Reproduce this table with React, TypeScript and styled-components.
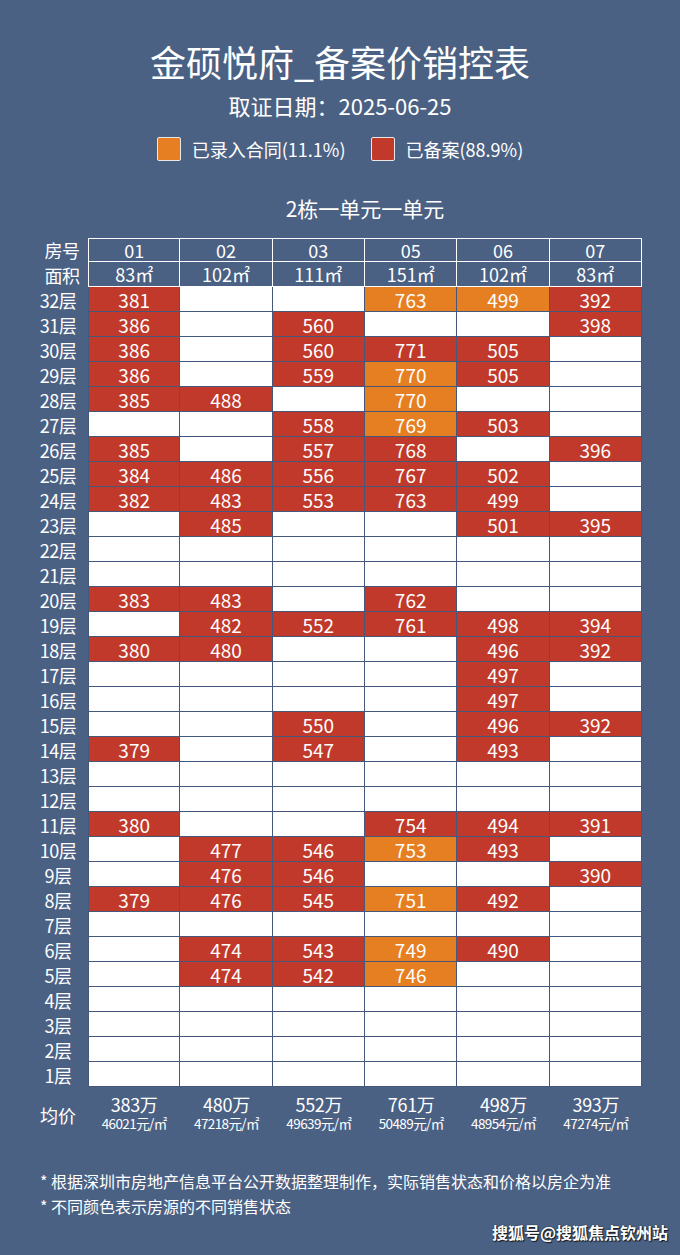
import React from 'react';
import styled, { createGlobalStyle } from 'styled-components';

const colors = {
	page: '#4b6184',
	line: '#43587b',
	filed: '#c0392b',
	contract: '#e67e22',
	white: '#ffffff',
};

const font = `"Noto Sans CJK SC", "Noto Sans", sans-serif`;

const GlobalStyle = createGlobalStyle`
	html, body {
		margin: 0;
		padding: 0;
		background: ${colors.page};
	}
	body {
		font-family: ${font};
		color: ${colors.white};
	}
`;

type Status = 'filed' | 'contract';

type Unit = {
	price: string;
	status: Status;
} | null;

const rooms = [
	{ no: '01', area: '83㎡', total: '383万', unit: '46021元/㎡' },
	{ no: '02', area: '102㎡', total: '480万', unit: '47218元/㎡' },
	{ no: '03', area: '111㎡', total: '552万', unit: '49639元/㎡' },
	{ no: '05', area: '151㎡', total: '761万', unit: '50489元/㎡' },
	{ no: '06', area: '102㎡', total: '498万', unit: '48954元/㎡' },
	{ no: '07', area: '83㎡', total: '393万', unit: '47274元/㎡' },
];

// r = 已备案, o = 已录入合同, empty = 未售
const plan: string[] = [
	'381r,,,763o,499o,392r', // 32
	'386r,,560r,,,398r',
	'386r,,560r,771r,505r,',
	'386r,,559r,770o,505r,',
	'385r,488r,,770o,,',
	',,558r,769o,503r,',
	'385r,,557r,768r,,396r',
	'384r,486r,556r,767r,502r,',
	'382r,483r,553r,763r,499r,',
	',485r,,,501r,395r',
	',,,,,',
	',,,,,',
	'383r,483r,,762r,,', // 20
	',482r,552r,761r,498r,394r',
	'380r,480r,,,496r,392r',
	',,,,497r,',
	',,,,497r,',
	',,550r,,496r,392r',
	'379r,,547r,,493r,',
	',,,,,',
	',,,,,',
	'380r,,,754r,494r,391r',
	',477r,546r,753o,493r,', // 10
	',476r,546r,,,390r',
	'379r,476r,545r,751o,492r,',
	',,,,,',
	',474r,543r,749o,490r,',
	',474r,542r,746o,,',
	',,,,,',
	',,,,,',
	',,,,,',
	',,,,,', // 1
];

const parseRow = (row: string): Unit[] =>
	row.split(',').map((cell) => {
		if (!cell) return null;
		return {
			price: cell.slice(0, -1),
			status: cell.endsWith('o') ? 'contract' : 'filed',
		};
	});

const Page = styled.div`
	min-height: 1255px;
	padding-top: 39px;
	box-sizing: border-box;
	background: ${colors.page};
`;

const Title = styled.h1`
	margin: 0;
	font-size: 36px;
	font-weight: 400;
	line-height: 44px;
	text-align: center;
`;

const Subtitle = styled.div`
	margin-top: 7px;
	font-size: 22px;
	line-height: 30px;
	text-align: center;
`;

const Legend = styled.div`
	margin-top: 17px;
	display: flex;
	justify-content: center;
	align-items: center;
	column-gap: 25px;
	height: 24px;
`;

const LegendItem = styled.div`
	display: flex;
	align-items: center;
	column-gap: 11px;
	font-size: 18px;
	line-height: 24px;
`;

const Swatch = styled.span<{ $status: Status }>`
	width: 22px;
	height: 22px;
	border: 1px solid #e8e8e8;
	border-radius: 2px;
	background: ${({ $status }) => ($status === 'contract' ? colors.contract : colors.filed)};
`;

const Building = styled.section`
	margin-top: 32px;
	padding-left: 28px;
	width: 614px;
`;

const SectionTitle = styled.div`
	padding-left: 60px;
	font-size: 21px;
	line-height: 30px;
	text-align: center;
	margin-bottom: 15px;
`;

const Table = styled.div`
	display: grid;
	grid-template-columns: 60px repeat(6, minmax(0, 1fr));
	grid-template-rows: 24px 25px repeat(32, 25px) auto;
`;

const RowLabel = styled.div<{ $shift?: boolean }>`
	display: flex;
	align-items: center;
	justify-content: center;
	padding-left: ${({ $shift }) => ($shift ? '8px' : '0')};
	font-size: 18px;
	line-height: 1;
	letter-spacing: -0.5px;
`;

const HeadCell = styled.div<{ $top?: boolean; $first?: boolean }>`
	display: flex;
	align-items: center;
	justify-content: center;
	box-sizing: border-box;
	border-right: 1px solid ${colors.white};
	border-bottom: 1px solid ${colors.white};
	border-top: ${({ $top }) => ($top ? `1px solid ${colors.white}` : 'none')};
	border-left: ${({ $first }) => ($first ? `1px solid ${colors.white}` : 'none')};
	font-size: 18px;
	line-height: 1;
`;

const UnitCell = styled.div<{ $status?: Status; $first?: boolean }>`
	display: flex;
	align-items: center;
	justify-content: center;
	box-sizing: border-box;
	border-right: 1px solid ${colors.line};
	border-bottom: 1px solid ${colors.line};
	border-left: ${({ $first }) => ($first ? `1px solid ${colors.line}` : 'none')};
	background: ${({ $status }) =>
		$status === 'contract' ? colors.contract : $status === 'filed' ? colors.filed : colors.white};
	font-size: 19px;
	line-height: 1;
	padding-top: 1px;
`;

const AvgLabel = styled.div`
	display: flex;
	align-items: center;
	justify-content: center;
	padding-top: 10px;
	font-size: 18px;
	line-height: 1;
`;

const AvgCell = styled.div`
	display: flex;
	flex-direction: column;
	align-items: center;
	padding-top: 7px;
	white-space: nowrap;
`;

const AvgTotal = styled.span`
	font-size: 18px;
	line-height: 21px;
	letter-spacing: -0.3px;
`;

const AvgUnit = styled.span`
	font-size: 13.5px;
	line-height: 17px;
	letter-spacing: -0.6px;
`;

const Notes = styled.div`
	margin-top: 37px;
	padding-left: 40px;
`;

const Note = styled.div`
	font-size: 16px;
	line-height: 25px;
	white-space: nowrap;
`;

const Watermark = styled.div`
	margin-top: 3px;
	padding-right: 12px;
	text-align: right;
	font-size: 16px;
	font-weight: 700;
	line-height: 20px;
	text-shadow: 1px 1px 1px rgba(0, 0, 0, 0.75), 0 0 2px rgba(0, 0, 0, 0.5);
`;

export default function App() {
	return (
		<Page>
			<GlobalStyle />
			<Title>金硕悦府_备案价销控表</Title>
			<Subtitle>取证日期：2025-06-25</Subtitle>
			<Legend>
				<LegendItem>
					<Swatch $status="contract" />
					已录入合同(11.1%)
				</LegendItem>
				<LegendItem>
					<Swatch $status="filed" />
					已备案(88.9%)
				</LegendItem>
			</Legend>

			<Building>
				<SectionTitle>2栋一单元一单元</SectionTitle>
				<Table>
					<RowLabel $shift>房号</RowLabel>
					{rooms.map((room, i) => (
						<HeadCell key={`no-${room.no}`} $top $first={i === 0}>
							{room.no}
						</HeadCell>
					))}
					<RowLabel $shift>面积</RowLabel>
					{rooms.map((room, i) => (
						<HeadCell key={`area-${room.no}`} $first={i === 0}>
							{room.area}
						</HeadCell>
					))}

					{plan.map((row, idx) => {
						const floor = plan.length - idx;
						return (
							<React.Fragment key={floor}>
								<RowLabel>{floor}层</RowLabel>
								{parseRow(row).map((unit, i) => (
									<UnitCell key={i} $first={i === 0} $status={unit?.status}>
										{unit?.price}
									</UnitCell>
								))}
							</React.Fragment>
						);
					})}

					<AvgLabel>均价</AvgLabel>
					{rooms.map((room) => (
						<AvgCell key={`avg-${room.no}`}>
							<AvgTotal>{room.total}</AvgTotal>
							<AvgUnit>{room.unit}</AvgUnit>
						</AvgCell>
					))}
				</Table>
			</Building>

			<Notes>
				<Note>* 根据深圳市房地产信息平台公开数据整理制作，实际销售状态和价格以房企为准</Note>
				<Note>* 不同颜色表示房源的不同销售状态</Note>
			</Notes>
			<Watermark>搜狐号@搜狐焦点钦州站</Watermark>
		</Page>
	);
}
